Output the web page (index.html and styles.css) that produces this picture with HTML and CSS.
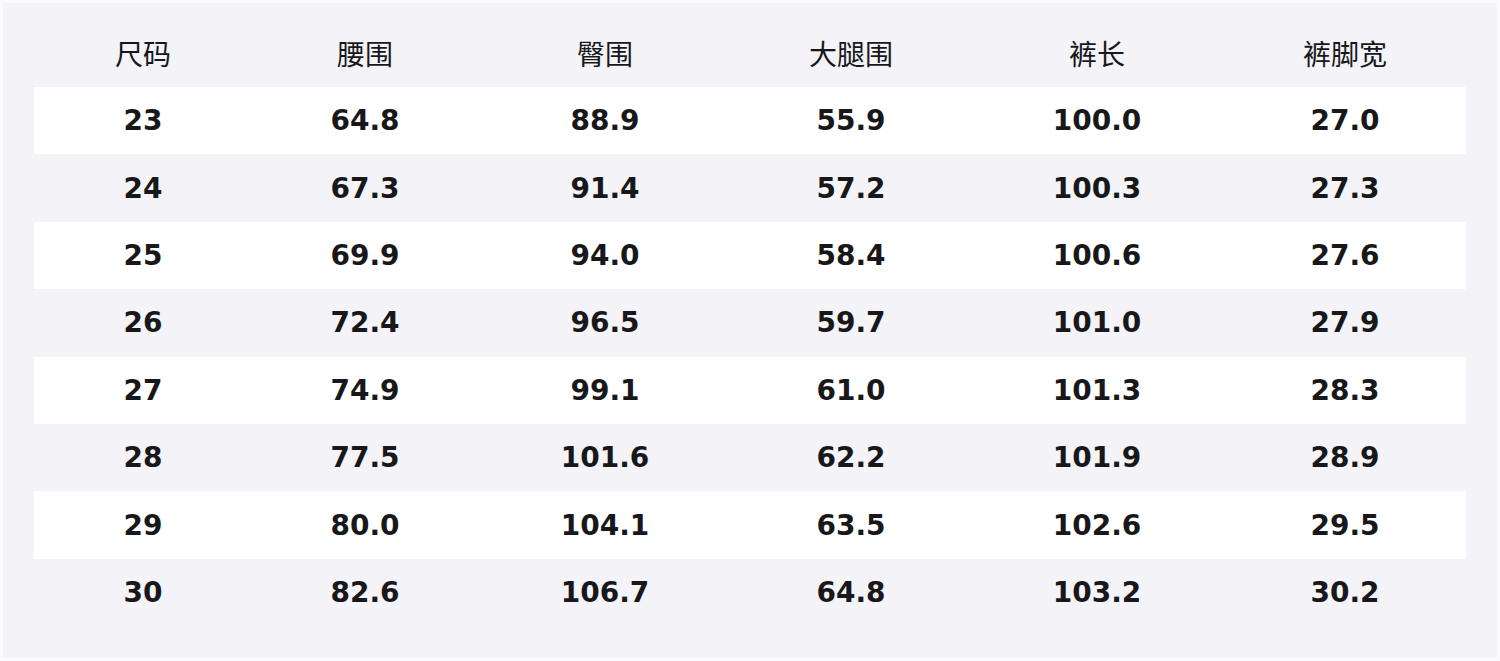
FILE: index.html
```html
<!DOCTYPE html>
<html lang="zh">
<head>
<meta charset="utf-8">
<link rel="stylesheet" href="styles.css">
</head>
<body>
<div class="panel">
<table class="size-table">
<colgroup>
<col class="c1"><col class="c2"><col class="c3"><col class="c4"><col class="c5"><col class="c6">
</colgroup>
<thead>
<tr><th>尺码</th><th>腰围</th><th>臀围</th><th>大腿围</th><th>裤长</th><th>裤脚宽</th></tr>
</thead>
<tbody>
<tr><td>23</td><td>64.8</td><td>88.9</td><td>55.9</td><td>100.0</td><td>27.0</td></tr>
<tr><td>24</td><td>67.3</td><td>91.4</td><td>57.2</td><td>100.3</td><td>27.3</td></tr>
<tr><td>25</td><td>69.9</td><td>94.0</td><td>58.4</td><td>100.6</td><td>27.6</td></tr>
<tr><td>26</td><td>72.4</td><td>96.5</td><td>59.7</td><td>101.0</td><td>27.9</td></tr>
<tr><td>27</td><td>74.9</td><td>99.1</td><td>61.0</td><td>101.3</td><td>28.3</td></tr>
<tr><td>28</td><td>77.5</td><td>101.6</td><td>62.2</td><td>101.9</td><td>28.9</td></tr>
<tr><td>29</td><td>80.0</td><td>104.1</td><td>63.5</td><td>102.6</td><td>29.5</td></tr>
<tr><td>30</td><td>82.6</td><td>106.7</td><td>64.8</td><td>103.2</td><td>30.2</td></tr>
</tbody>
</table>
</div>
</body>
</html>
```

FILE: styles.css
```css
html, body {
  margin: 0;
  padding: 0;
  background: #fbfbfd;
}
.panel {
  margin: 3px;
  height: 655px;
  box-sizing: border-box;
  padding: 15px 31px 0 31px;
  background: #f3f3f8;
}
.size-table {
  width: 1432px;
  border-collapse: collapse;
  table-layout: fixed;
  color: #18181a;
}
.c1 { width: 218px; }
.c2 { width: 226px; }
.c3 { width: 254px; }
.c4 { width: 238px; }
.c5 { width: 254px; }
.c6 { width: 242px; }
.size-table th {
  height: 69px;
  padding: 0;
  text-align: center;
  font-family: "Noto Sans CJK SC", "Noto Sans", sans-serif;
  font-weight: 400;
  font-size: 28px;
  vertical-align: middle;
}
.size-table td {
  height: 67.4px;
  padding: 0;
  text-align: center;
  vertical-align: middle;
  font-family: "DejaVu Sans", sans-serif;
  font-weight: 700;
  font-size: 28px;
}
.size-table tbody tr:nth-child(odd) {
  background: #ffffff;
}
```
